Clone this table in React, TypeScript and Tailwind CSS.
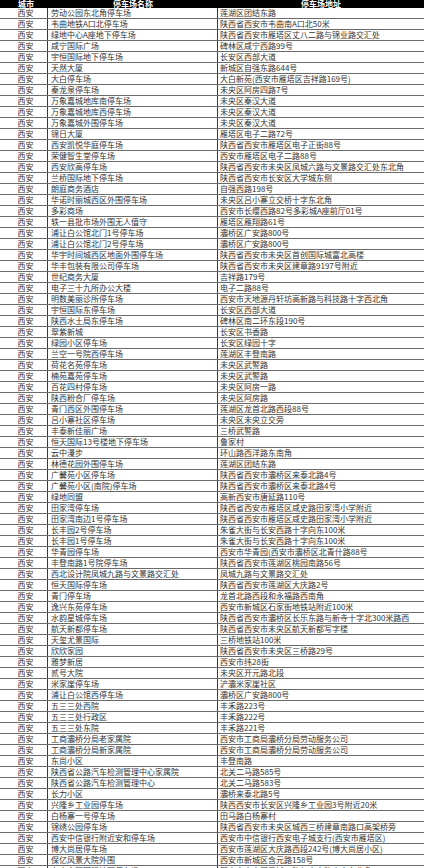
import React from "react";

// Parking lot list - Xi'an
const rows: [string, string][] = [
  ["劳动公园东北角停车场", "莲湖区团结东路"],
  ["韦曲地铁A口北停车场", "陕西省西安市韦曲南A口北50米"],
  ["绿地中心A座地下停车场", "陕西省西安市雁塔区丈八二路与锦业路交汇处"],
  ["咸宁国际广场", "碑林区咸宁西路99号"],
  ["宇恒国际地下停车场", "长安区西部大道"],
  ["天然大厦", "新城区自强东路644号"],
  ["大白停车场", "大白新苑(西安市雁塔区吉祥路169号)"],
  ["秦龙泉停车场", "未央区阿房四路7号"],
  ["万象嘉城地库南停车场", "未央区秦汉大道"],
  ["万象嘉城地库西停车场", "未央区秦汉大道"],
  ["万象嘉城外围停车场", "未央区秦汉大道"],
  ["锦日大厦", "雁塔区电子二路72号"],
  ["西安凯悦华庭停车场", "陕西省西安市雁塔区电子正街88号"],
  ["荣健智生堂停车场", "西安市雁塔区电子二路88号"],
  ["西安欣高停车场", "陕西省西安市未央区凤城六路与文景路交汇处东北角"],
  ["兰桥国际地下停车场", "陕西省西安市长安区大学城东侧"],
  ["朗庭商务酒店", "自强西路198号"],
  ["华诺时丽城西区外围停车场", "未央区吕小寨立交桥十字东北角"],
  ["多彩商场", "西安市长缨西路82号多彩城A座前厅01号"],
  ["轶一县批市场外围无人值守", "雁塔区雁翔路61号"],
  ["浦让白公馆北门1号停车场", "灞桥区广安路800号"],
  ["浦让白公馆北门2号停车场", "灞桥区广安路800号"],
  ["华宇时间城西区地面外围停车场", "陕西省西安市未央区首创国际城富北高楼"],
  ["华丰包装有限公司停车场", "陕西省西安市未央区建章路9197号附近"],
  ["世纪商务大厦", "吉祥路179号"],
  ["电子三十九所办公大楼", "电子二路88号"],
  ["明数美丽诊所停车场", "西安市天地源丹轩坊高新路与科技路十字西北角"],
  ["宇恒国际东停车场", "长安区西部大道"],
  ["陕西水土局东停车场", "碑林区南二环东段190号"],
  ["翠紫新城", "长安区书香路"],
  ["绿园小区停车场", "长安区绿园十字"],
  ["兰空一号院西停车场", "莲湖区丰登南路"],
  ["荷花名苑停车场", "未央区武警路"],
  ["楠苑嘉苑停车场", "未央区武警路"],
  ["百花四村停车场", "未央区阿房一路"],
  ["陕西粉合厂停车场", "未央区阿房路"],
  ["青门西区外围停车场", "莲湖区龙首北路西段88号"],
  ["吕小寨社区停车场", "未央区未央立交旁"],
  ["丰泰新佳丽广场", "三桥武警路"],
  ["恒天国际13号楼地下停车场", "鲁家村"],
  ["云中漫步", "环山路西洋路东南角"],
  ["林德花园外围停车场", "莲湖区团结东路"],
  ["广馨苑小区停车场", "陕西省西安市灞桥区来泰北路4号"],
  ["广馨苑小区(南院)停车场", "陕西省西安市灞桥区来泰北路4号"],
  ["绿地同盟", "高新西安市唐延路110号"],
  ["田家湾停车场", "陕西省西安市雁塔区咸史路田家湾小学附近"],
  ["田家湾南边1号停车场", "陕西省西安市雁塔区咸史路田家湾小学附近"],
  ["长丰园2号停车场", "朱雀大街与长安西路十字向东100米"],
  ["长丰园1号停车场", "朱雀大街与长安西路十字向东100米"],
  ["华青园停车场", "西安市华青园(西安市灞桥区北青什路88号"],
  ["丰登南路1号院停车场", "陕西省西安市莲湖区桃园南路56号"],
  ["西北设计院凤城九路与文景路交汇处", "凤城九路与文景路交汇处"],
  ["恒天国际停车场", "陕西省西安市莲湖区大庆路2号"],
  ["青门停车场", "龙首北路西段和永福路西南角"],
  ["逸兴东苑停车场", "西安市新城区石家街地铁站附近100米"],
  ["水韵星城停车场", "陕西省西安市灞桥区长乐东路与新寺十字北300米路西"],
  ["航天新都停车场", "陕西省西安市未央区航天新都写字楼"],
  ["天玺尤景国际", "三桥地铁站100米"],
  ["欣欣家园", "陕西省西安市未央区三桥路29号"],
  ["雅梦新居", "西安市纬28街"],
  ["贰号大院", "未央区开元路北段"],
  ["米家崖停车场", "浐灞米家崖社区"],
  ["浦让白公馆西停车场", "灞桥区广安路800号"],
  ["五三三处西院", "丰禾路223号"],
  ["五三三处行政区", "丰禾路222号"],
  ["五三三处东院", "丰禾路221号"],
  ["工商灞桥分局老家属院", "西安市工商局灞桥分局劳动服务公司"],
  ["工商灞桥分局新家属院", "西安市工商局灞桥分局劳动服务公司"],
  ["东尚小区", "丰登南路"],
  ["陕西省公路汽车检测管理中心家属院", "北关二马路585号"],
  ["陕西省公路汽车检测管理中心", "北关二马路583号"],
  ["长力小区", "灞桥来泰北路5号"],
  ["兴隆乡工业园停车场", "陕西西安市长安区兴隆乡工业园3号附近20米"],
  ["白杨寨一号停车场", "田马路白杨寨村"],
  ["锦绣公园停车场", "陕西省西安市未央区城西三桥建章南路口高架桥旁"],
  ["西安中信银行附近安和停车场", "西安市中信银行西安电子城支行(西安市雁塔区)"],
  ["博大尚居停车场", "西安市莲湖区大庆路西段242号(博大尚居小区)"],
  ["保亿风景大院外围", "西安市新城区含元路158号"],
  ["东方金石国际地下停车场", "西安市未央区凤城五路与未央路十字东北角"],
];

export default function App() {
  return (
    <div className="w-[424px] h-[868px] overflow-hidden bg-white font-['Noto_Sans_CJK_SC','Liberation_Sans',sans-serif] text-[8px] leading-[10px] text-[#333333]">
      {/* Header (top is cut off in the shot) */}
      <div className="grid grid-cols-[48px_170px_1fr] h-[8px] bg-black text-white font-bold leading-[8px] overflow-hidden">
        <div className="text-center pl-1">城市</div>
        <div className="text-center">停车场名称</div>
        <div className="text-center">停车场地址</div>
      </div>

      {/* Rows */}
      {rows.map(([name, addr], i) => (
        <div
          key={i}
          className="grid grid-cols-[48px_170px_1fr] h-[11px] border-b border-[#6b6b6b] items-center"
        >
          <div className="h-full flex items-center justify-center pl-1 border-r border-[#3a3a3a]">
            西安
          </div>
          <div className="h-full flex items-center pl-[3px] whitespace-nowrap overflow-hidden border-r border-[#3a3a3a]">
            {name}
          </div>
          <div className="h-full flex items-center pl-[2px] whitespace-nowrap overflow-hidden">
            {addr}
          </div>
        </div>
      ))}
    </div>
  );
}
